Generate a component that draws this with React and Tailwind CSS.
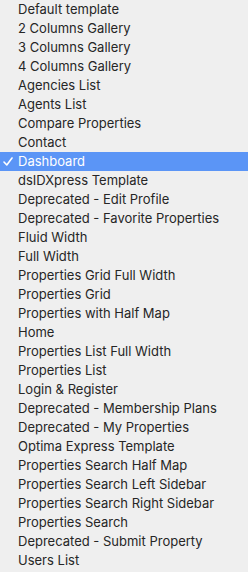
const items = [
  "Default template",
  "2 Columns Gallery",
  "3 Columns Gallery",
  "4 Columns Gallery",
  "Agencies List",
  "Agents List",
  "Compare Properties",
  "Contact",
  "Dashboard",
  "dsIDXpress Template",
  "Deprecated - Edit Profile",
  "Deprecated - Favorite Properties",
  "Fluid Width",
  "Full Width",
  "Properties Grid Full Width",
  "Properties Grid",
  "Properties with Half Map",
  "Home",
  "Properties List Full Width",
  "Properties List",
  "Login & Register",
  "Deprecated - Membership Plans",
  "Deprecated - My Properties",
  "Optima Express Template",
  "Properties Search Half Map",
  "Properties Search Left Sidebar",
  "Properties Search Right Sidebar",
  "Properties Search",
  "Deprecated - Submit Property",
  "Users List",
];

export default function App() {
  return (
    <div className="h-[572px] w-[248px] overflow-hidden bg-[#efefef] font-['Inter',sans-serif] text-[13px] text-[#262626]">
      <ul>
        {items.map((item) => {
          const active = item === "Dashboard";
          return (
            <li
              key={item}
              className={
                "relative flex h-[19px] items-center whitespace-nowrap pl-[18px] " +
                (active ? "bg-[#5b95f6] text-white" : "")
              }
            >
              {active && (
                <svg
                  className="absolute left-[3px] top-[5px]"
                  width="10"
                  height="9"
                  viewBox="0 0 10 9"
                  fill="none"
                >
                  <path d="M1 5 L3.8 8 L9 1" stroke="white" strokeWidth="1.6" strokeLinecap="round" strokeLinejoin="round" />
                </svg>
              )}
              {item}
            </li>
          );
        })}
      </ul>
    </div>
  );
}
